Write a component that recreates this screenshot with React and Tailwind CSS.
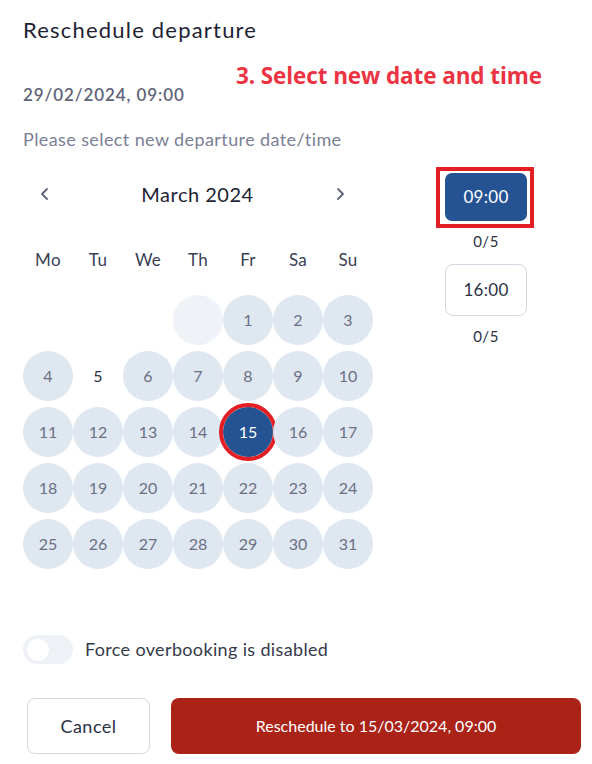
import React, { useState } from "react";

const days = [
  null, null, null, "ghost",
  1, 2, 3, 4, 5, 6, 7, 8, 9, 10, 11, 12, 13, 14, 15, 16, 17, 18, 19, 20, 21, 22, 23, 24, 25, 26, 27, 28, 29, 30, 31,
];
const weekdays = ["Mo", "Tu", "We", "Th", "Fr", "Sa", "Su"];

function Chevron({ dir }) {
  return (
    <svg width="14" height="14" viewBox="0 0 14 14" fill="none">
      <path
        d={dir === "left" ? "M9 2 L4 7 L9 12" : "M5 2 L10 7 L5 12"}
        stroke="#5f6478"
        strokeWidth="1.8"
        strokeLinecap="round"
        strokeLinejoin="round"
      />
    </svg>
  );
}

export default function App() {
  const [selected, setSelected] = useState(15);
  const [time, setTime] = useState("09:00");
  const [force, setForce] = useState(false);

  return (
    <div className="relative w-[592px] h-[764px] bg-white px-[23px] font-['Lato',sans-serif] text-[#2c3144]">
      <h2 className="pt-[16px] text-[22px] leading-[28px] tracking-[1.2px] text-[#1f2333]">Reschedule departure</h2>

      <div className="absolute left-[236px] top-[59px] text-[22.5px] font-bold text-[#ec3342] font-['Open_Sans',sans-serif] tracking-[-0.1px]">
        3. Select new date and time
      </div>

      <p className="mt-[39px] text-[17px] leading-[24px] tracking-[0.9px] font-semibold text-[#5f6478]">29/02/2024, 09:00</p>
      <p className="mt-[20px] text-[18px] leading-[24px] tracking-[0.4px] text-[#7b8094]">Please select new departure date/time</p>

      <div className="flex mt-[27px]">
        <div className="w-[350px]">
          <div className="flex items-center justify-between h-[32px] pl-[15px] pr-[26px]">
            <button className="w-[14px] h-[14px] flex items-center justify-center">
              <Chevron dir="left" />
            </button>
            <span className="text-[20px] tracking-[0.5px] text-[#1f2333] translate-x-[5px]">March 2024</span>
            <button className="w-[14px] h-[14px] flex items-center justify-center">
              <Chevron dir="right" />
            </button>
          </div>

          <div className="grid grid-cols-7 mt-[37px] h-[26px] items-center">
            {weekdays.map((d) => (
              <div key={d} className="text-center text-[17px] tracking-[0.3px] text-[#3b4054]">{d}</div>
            ))}
          </div>

          <div className="grid grid-cols-7 gap-y-[6px] mt-[22px]">
            {days.map((d, i) => {
              if (d === null) return <div key={i} className="h-[50px]" />;
              if (d === "ghost")
                return <div key={i} className="w-[50px] h-[50px] rounded-full bg-[#eff3f7]" />;
              if (d === 5)
                return (
                  <div key={i} className="w-[50px] h-[50px] flex items-center justify-center text-[16px] text-[#2c3144]">
                    {d}
                  </div>
                );
              const isSel = d === selected;
              return (
                <div key={i} className="relative w-[50px] h-[50px]">
                  <button
                    onClick={() => setSelected(d)}
                    className={
                      isSel
                        ? "w-[50px] h-[50px] rounded-full bg-[#245293] text-white text-[16px] flex items-center justify-center"
                        : "w-[50px] h-[50px] rounded-full bg-[#dfe7f1] text-[#6b7085] text-[16px] flex items-center justify-center"
                    }
                  >
                    {d}
                  </button>
                  {isSel && (
                    <div className="absolute left-[-4px] top-[-4px] w-[58px] h-[58px] rounded-full border-[4px] border-[#e31e24] pointer-events-none" />
                  )}
                </div>
              );
            })}
          </div>
        </div>

        <div className="ml-[64px] w-[98px] flex flex-col items-center mt-[-5px]">
          {["09:00", "16:00"].map((t, i) => {
            const on = time === t;
            return (
              <div key={t} className={i === 0 ? "flex flex-col items-center" : "flex flex-col items-center mt-[15px]"}>
                <div className="relative">
                  <button
                    onClick={() => setTime(t)}
                    className={
                      on
                        ? "w-[82px] h-[48px] rounded-[7px] bg-[#245293] text-white text-[17px] tracking-[0.3px]"
                        : "w-[82px] h-[52px] rounded-[8px] border border-[#d5d6e2] bg-white text-[#2c3144] text-[17px] tracking-[0.3px]"
                    }
                  >
                    {t}
                  </button>
                  {i === 0 && (
                    <div className="absolute left-[-9px] top-[-6px] w-[98px] h-[61px] border-[4px] border-[#e31e24] pointer-events-none" />
                  )}
                </div>
                <span className="mt-[12px] text-[15px] leading-[16px] tracking-[0.5px] text-[#2c3144]">0/5</span>
              </div>
            );
          })}
        </div>
      </div>

      <div className="flex items-center mt-[66px]">
        <button
          onClick={() => setForce(!force)}
          className="w-[50px] h-[29px] rounded-full bg-[#eef1f5] flex items-center px-[4px]"
        >
          <span className="w-[22px] h-[22px] rounded-full bg-white" />
        </button>
        <span className="ml-[12px] text-[18px] tracking-[0.35px] text-[#353a4b]">Force overbooking is disabled</span>
      </div>

      <div className="flex mt-[34px] pl-[4px] gap-[21px]">
        <button className="w-[123px] h-[56px] rounded-[8px] border border-[#d5d6e2] bg-white text-[18px] tracking-[0.5px] text-[#2c3144]">
          Cancel
        </button>
        <button className="flex-1 h-[56px] rounded-[8px] bg-[#aa2316] text-white text-[16px] mr-[-12px]">
          Reschedule to 15/03/2024, 09:00
        </button>
      </div>
    </div>
  );
}
